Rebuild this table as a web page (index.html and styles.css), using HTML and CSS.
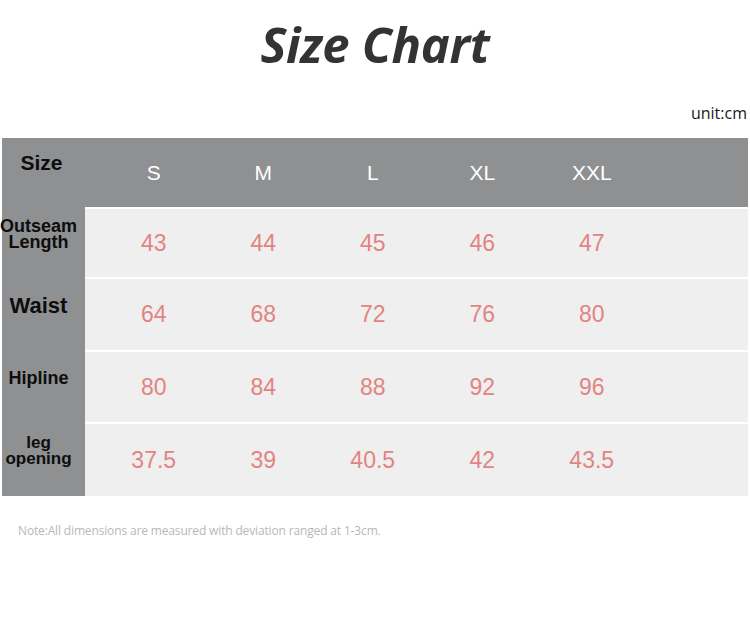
FILE: index.html
```html
<!DOCTYPE html>
<html>
<head>
<meta charset="utf-8">
<link rel="stylesheet" href="styles.css">
</head>
<body>
<div class="page">
  <h1 class="title">Size Chart</h1>
  <div class="unit">unit:cm</div>
  <div class="chart">
    <div class="label head-label"><span class="lbl-size">Size</span></div>
    <div class="row head">
      <span>S</span><span>M</span><span>L</span><span>XL</span><span>XXL</span>
    </div>

    <div class="label"><span class="lbl-two lbl-out">Outseam<br>Length</span></div>
    <div class="row data r1">
      <span>43</span><span>44</span><span>45</span><span>46</span><span>47</span>
    </div>

    <div class="label"><span class="lbl-waist">Waist</span></div>
    <div class="row data r2">
      <span>64</span><span>68</span><span>72</span><span>76</span><span>80</span>
    </div>

    <div class="label"><span class="lbl-hip">Hipline</span></div>
    <div class="row data r3">
      <span>80</span><span>84</span><span>88</span><span>92</span><span>96</span>
    </div>

    <div class="label"><span class="lbl-two">leg<br>opening</span></div>
    <div class="row data r4">
      <span>37.5</span><span>39</span><span>40.5</span><span>42</span><span>43.5</span>
    </div>
  </div>
  <p class="note">Note:All dimensions are measured with deviation ranged at 1-3cm.</p>
</div>
</body>
</html>
```
FILE: styles.css
```css
html, body {
  margin: 0;
  padding: 0;
  background: #ffffff;
}

.page {
  width: 750px;
  height: 630px;
  overflow: hidden;
}

.title {
  margin: 0;
  padding-top: 14px;
  height: 84px;
  box-sizing: border-box;
  text-align: center;
  font-family: "Open Sans", "DejaVu Sans", sans-serif;
  font-style: italic;
  font-weight: 700;
  font-size: 49px;
  line-height: 60px;
  color: #333333;
  letter-spacing: -0.3px;
}

.unit {
  height: 54px;
  padding-top: 19px;
  box-sizing: border-box;
  text-align: right;
  padding-right: 3px;
  font-family: "Open Sans", "DejaVu Sans", sans-serif;
  font-weight: 500;
  font-size: 16px;
  line-height: 20px;
  color: #1a1a1a;
}

.chart {
  margin-left: 2px;
  width: 746px;
  display: grid;
  grid-template-columns: 83px 1fr;
  grid-template-rows: 69px 68px 71px 70px 72px;
  row-gap: 2px;
  background: linear-gradient(to right, #8f9092 83px, #ffffff 83px);
}

.label {
  background: #8f9092;
  display: flex;
  align-items: center;
  justify-content: center;
  padding-right: 10px;
  padding-bottom: 18px;
  font-family: "Liberation Sans", Arial, sans-serif;
  font-weight: 700;
  color: #0d0d0d;
  white-space: nowrap;
}

.lbl-size {
  font-size: 21px;
  padding-left: 6px;
  padding-bottom: 2px;
}

.lbl-waist {
  font-size: 22px;
}

.lbl-hip {
  font-size: 18px;
}

.lbl-two {
  font-size: 17px;
  line-height: 16px;
  text-align: center;
}

.lbl-out {
  font-size: 18px;
}

.row {
  display: grid;
  grid-template-columns: repeat(5, 109.5px);
  padding-left: 14px;
  align-items: center;
  justify-items: center;
  font-family: "Liberation Sans", Arial, sans-serif;
}

.head {
  background: #8f9092;
  color: #ffffff;
  font-size: 21px;
}

.data {
  background: #efefef;
  color: #e28481;
  font-size: 23px;
}

.note {
  margin: 27px 0 0 18px;
  font-family: "Open Sans", "DejaVu Sans", sans-serif;
  font-size: 12px;
  line-height: 16px;
  color: #b8b8b8;
  letter-spacing: -0.15px;
}
```
